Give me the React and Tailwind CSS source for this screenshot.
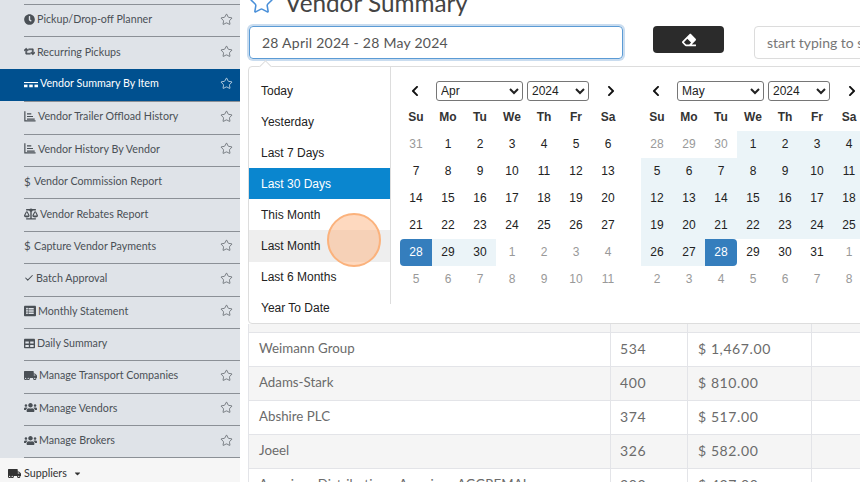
import { FaClock, FaRetweet, FaBalanceScale, FaTable, FaTruckMoving, FaUsers, FaEraser, FaCaretDown, FaListAlt, FaChevronLeft, FaChevronRight } from 'react-icons/fa';
import { Check, Star } from 'lucide-react';

const BarsIcon = () => (
  <svg viewBox="0 0 14 12" className="w-[12px] h-[11px]" fill="none" stroke="currentColor" strokeWidth="1.4">
    <path d="M1 0v11.2h12.5" />
    <path d="M3.5 3h5M3.5 6h7M3.5 9h9" />
  </svg>
);

const DashIcon = () => (
  <svg viewBox="0 0 16 8" className="w-[14px] h-[7px] mt-[5px]" fill="currentColor">
    <rect x="0" y="0" width="16" height="1.2" />
    <rect x="0" y="3" width="4" height="3" />
    <rect x="6" y="3" width="4" height="3" />
    <rect x="12" y="3" width="4" height="3" />
  </svg>
);

const Dollar = () => <span className="w-[8px] text-[11.5px]">$</span>;

const menu = [
  { icon: <FaClock size={11} />, label: 'Pickup/Drop-off Planner', star: true },
  { icon: <FaRetweet size={11} className="stroke-current stroke-[30px]" />, label: 'Recurring Pickups', star: true },
  { icon: <DashIcon />, label: 'Vendor Summary By Item', star: true, active: true },
  { icon: <BarsIcon />, label: 'Vendor Trailer Offload History', star: true },
  { icon: <BarsIcon />, label: 'Vendor History By Vendor', star: true },
  { icon: <Dollar />, label: 'Vendor Commission Report' },
  { icon: <FaBalanceScale size={14} />, label: 'Vendor Rebates Report' },
  { icon: <Dollar />, label: 'Capture Vendor Payments', star: true },
  { icon: <Check size={10} strokeWidth={2.5} />, label: 'Batch Approval', star: true },
  { icon: <FaListAlt size={12} />, label: 'Monthly Statement', star: true },
  { icon: <FaTable size={11} />, label: 'Daily Summary' },
  { icon: <FaTruckMoving size={13} />, label: 'Manage Transport Companies', star: true },
  { icon: <FaUsers size={13} />, label: 'Manage Vendors', star: true },
  { icon: <FaUsers size={13} />, label: 'Manage Brokers', star: true },
];

const ranges = ['Today', 'Yesterday', 'Last 7 Days', 'Last 30 Days', 'This Month', 'Last Month', 'Last 6 Months', 'Year To Date'];
const weekDays = ['Su', 'Mo', 'Tu', 'We', 'Th', 'Fr', 'Sa'];
const months = ['Jan', 'Feb', 'Mar', 'Apr', 'May', 'Jun', 'Jul', 'Aug', 'Sep', 'Oct', 'Nov', 'Dec'];

// kind: o = other month, r = in range, s = range start, e = range end
const aprilDays = [
  [31, 'o'], [1], [2], [3], [4], [5], [6],
  [7], [8], [9], [10], [11], [12], [13],
  [14], [15], [16], [17], [18], [19], [20],
  [21], [22], [23], [24], [25], [26], [27],
  [28, 's'], [29, 'r'], [30, 'r'], [1, 'o'], [2, 'o'], [3, 'o'], [4, 'o'],
  [5, 'o'], [6, 'o'], [7, 'o'], [8, 'o'], [9, 'o'], [10, 'o'], [11, 'o'],
];
const mayDays = [
  [28, 'o'], [29, 'o'], [30, 'o'], [1, 'r'], [2, 'r'], [3, 'r'], [4, 'r'],
  [5, 'r'], [6, 'r'], [7, 'r'], [8, 'r'], [9, 'r'], [10, 'r'], [11, 'r'],
  [12, 'r'], [13, 'r'], [14, 'r'], [15, 'r'], [16, 'r'], [17, 'r'], [18, 'r'],
  [19, 'r'], [20, 'r'], [21, 'r'], [22, 'r'], [23, 'r'], [24, 'r'], [25, 'r'],
  [26, 'r'], [27, 'r'], [28, 'e'], [29], [30], [31], [1, 'o'],
  [2, 'o'], [3, 'o'], [4, 'o'], [5, 'o'], [6, 'o'], [7, 'o'], [8, 'o'],
];

const dayClass = {
  o: 'text-[#999999]',
  r: 'bg-[#ebf4f8] text-[#222222]',
  s: 'bg-[#357ebd] text-white rounded-l-[4px]',
  e: 'bg-[#357ebd] text-white rounded-r-[4px]',
};

const rows = [
  { name: 'Weimann Group', qty: '534', amount: '$ 1,467.00' },
  { name: 'Adams-Stark', qty: '400', amount: '$ 810.00' },
  { name: 'Abshire PLC', qty: '374', amount: '$ 517.00' },
  { name: 'Joeel', qty: '326', amount: '$ 582.00' },
  { name: 'American Distribution - American AGGREMAI', qty: '303', amount: '$ 437.00' },
];

const Calendar = ({ month, days }) => (
  <div className="w-[224px] shrink-0">
    <div className="flex items-center h-[27px] text-[#111111]">
      <FaChevronLeft size={12} className="ml-[9px] w-[12px] shrink-0" />
      <select defaultValue={month} className="ml-[15px] w-[87px] h-[20px] pl-0 border border-[#767676] rounded-[3px] bg-white text-[12px] text-[#222222]">
        {months.map((m) => <option key={m}>{m}</option>)}
      </select>
      <select defaultValue="2024" className="ml-[4px] w-[62px] h-[20px] pl-0 border border-[#767676] rounded-[3px] bg-white text-[12px] text-[#222222]">
        <option>2023</option>
        <option>2024</option>
      </select>
      <FaChevronRight size={12} className="ml-[16px] w-[12px] shrink-0" />
    </div>
    <div className="grid grid-cols-[repeat(7,32px)] auto-rows-[27px] text-[12px] text-center leading-[27px] text-[#222222]">
      {weekDays.map((d) => <div key={d} className="font-bold text-[#333333]">{d}</div>)}
      {days.map(([n, kind], i) => (
        <div key={i} className={dayClass[kind] ?? ''}>{n}</div>
      ))}
    </div>
  </div>
);

const DatePopup = () => (
  <div className="absolute left-[8px] top-[66px] w-[641px] h-[258px] bg-white border border-[#dddddd] rounded-[4px] font-['Liberation_Sans',sans-serif]">
    <div className="absolute -top-[5px] left-[12px] w-[9px] h-[9px] rotate-45 bg-white border-l border-t border-[#dddddd]" />
    <div className="flex h-full">
      <div className="w-[142px] h-[237px] shrink-0 border-r border-[#dddddd] pt-[8px]">
        <div className="w-[141px]">
          {ranges.map((r) => (
            <div
              key={r}
              className={`h-[31.1px] pl-[12px] flex items-center text-[12px] whitespace-nowrap ${
                r === 'Last 30 Days' ? 'bg-[#0a86cf] text-white' : r === 'Last Month' ? 'bg-[#eeeeee] text-[#222222]' : 'text-[#222222]'
              }`}
            >
              {r}
            </div>
          ))}
        </div>
      </div>
      <div className="flex pl-[9px] pt-[10px] gap-[17px]">
        <Calendar month="Apr" days={aprilDays} />
        <Calendar month="May" days={mayDays} />
      </div>
    </div>
  </div>
);

export default function App() {
  return (
    <div className="relative flex w-[860px] h-[482px] overflow-hidden bg-white font-['Lato',sans-serif]">
      <aside className="w-[240px] shrink-0 h-full flex flex-col bg-[#dfe3e8] pt-[4px] text-[10.7px] text-[#4a5056]">
        <div className="flex-1 min-h-0">
          {menu.map((item) => (
            <div
              key={item.label}
              className={item.active ? 'h-[32.4px] bg-[#00508f] text-white' : 'h-[32.4px] pl-[24px]'}
            >
              <div className={`h-full flex items-center gap-[2px] pr-[7px] pb-[3px] ${item.active ? 'pl-[24px]' : 'border-t border-[#8b9096]'}`}>
                <span className="shrink-0 flex items-center">{item.icon}</span>
                <span className="flex-1 whitespace-nowrap">{item.label}</span>
                {item.star && <Star size={13} strokeWidth={1.25} className="shrink-0" />}
              </div>
            </div>
          ))}
          <div className="ml-[24px] border-t border-[#8b9096]" />
        </div>
        <div className="h-[24px] shrink-0 bg-[#f6f6f6] flex items-center gap-[3px] pl-[8px] pt-[6px] text-[#333333]">
          <FaTruckMoving size={13} />
          <span>Suppliers</span>
          <FaCaretDown size={9} className="ml-[3px]" />
        </div>
      </aside>

      <main className="relative flex-1 min-w-0 pl-[9px]">
        <div className="h-[26px] overflow-hidden flex items-end gap-[11px]">
          <Star size={25} strokeWidth={1.5} className="text-[#4a90d9] mb-[11px] shrink-0" />
          <span className="text-[24.3px] leading-[28px] mb-[9px] text-[#444444]">Vendor Summary</span>
        </div>
        <div className="flex items-start h-[33px] w-[640px]">
          <div className="w-[374px] h-[33px] shrink-0 flex items-center pl-[12px] rounded-[4px] border border-[#5b9bd5] ring-2 ring-[#c9dcef] text-[14px] tracking-[0.25px] text-[#555555]">
            28 April 2024 - 28 May 2024
          </div>
          <button className="ml-[30px] w-[71px] h-[27px] shrink-0 bg-[#2b2b2b] rounded-[4px] flex items-center justify-center text-white">
            <FaEraser size={14} />
          </button>
          <div className="ml-[30px] w-[160px] h-[33px] shrink-0 flex items-center pl-[12px] rounded-[4px] border border-[#dcdcdc] text-[14px] whitespace-nowrap text-[#777777] overflow-hidden">
            start typing to search
          </div>
        </div>

        <div className="-ml-px mt-[265px] w-[641px] text-[13.3px] text-[#6b6b6b] border-l border-[#e3e4e8]">
          <div className="grid grid-cols-[362px_77px_124px_1fr] h-[9px] bg-[#f5f5f5] border-b border-[#e3e4e8]">
            <div className="border-r border-[#e3e4e8]" />
            <div className="border-r border-[#e3e4e8]" />
            <div className="border-r border-[#e3e4e8]" />
          </div>
          {rows.map((row, i) => (
            <div
              key={row.name}
              className={`grid grid-cols-[362px_77px_124px_1fr] h-[34px] items-stretch border-b border-[#e3e4e8] ${i % 2 ? 'bg-[#f5f5f5]' : 'bg-white'}`}
            >
              <div className="pl-[10px] pb-[1px] flex items-center border-r border-[#e3e4e8] whitespace-nowrap">{row.name}</div>
              <div className="pl-[9px] pb-[2px] flex items-center border-r border-[#e3e4e8] text-[14px] tracking-[0.6px]">{row.qty}</div>
              <div className="pl-[10px] pb-[2px] flex items-center border-r border-[#e3e4e8] text-[14px] tracking-[0.6px]">{row.amount}</div>
              <div />
            </div>
          ))}
        </div>

        <DatePopup />
        <div className="absolute left-[87px] top-[213px] w-[54px] h-[54px] rounded-full bg-[#fdb98a]/55 border-2 border-[#fbb27c]" />
      </main>
    </div>
  );
}
